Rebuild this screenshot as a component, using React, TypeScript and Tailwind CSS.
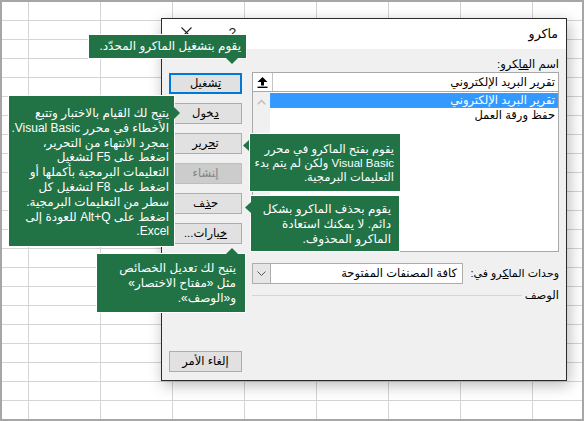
import React from "react";

const ui = "font-['Liberation_Sans','DejaVu_Sans',sans-serif]";
const J = "\u200d";

function Sheet() {
  const cells = Array.from({ length: 22 * 9 });
  return (
    <div className="h-[421px] w-[584px] overflow-hidden border-2 border-[#a6a6a6] bg-white">
      <div className="grid auto-rows-[19px] grid-cols-[27px_repeat(8,72px)]">
        {cells.map((_, i) => (
          <div key={i} className="border-b border-r border-[#d4d4d4]" />
        ))}
      </div>
    </div>
  );
}

// Arabic label with one underlined (accelerator) letter; ZWJ keeps the letters joined
function Acc({ pre, key_, post }: { pre: string; key_: string; post: string }) {
  return (
    <>
      {pre ? pre + J : null}
      <u>{(pre ? J : "") + key_ + (post ? J : "")}</u>
      {post ? J + post : null}
    </>
  );
}

function Btn({ children, kind }: { children: React.ReactNode; kind?: "default" | "disabled" }) {
  if (kind === "default")
    return (
      <div className="flex h-[21px] items-center justify-center border-2 border-[#0078d7] bg-[#e1e1e1] text-[11.5px] text-black">
        {children}
      </div>
    );
  if (kind === "disabled")
    return (
      <div className="flex h-[21px] items-center justify-center border border-[#bfbfbf] bg-[#cccccc] text-[11.5px] text-[#838383]">
        {children}
      </div>
    );
  return (
    <div className="flex h-[21px] items-center justify-center border border-[#adadad] bg-[#e1e1e1] text-[11.5px] text-black">
      {children}
    </div>
  );
}

function Dialog() {
  return (
    <div
      dir="rtl"
      className="absolute left-[161px] top-[18px] flex h-[363px] w-[406px] flex-col border border-[#2b2b2b] bg-[#f0f0f0] shadow-[2px_4px_14px_rgba(0,0,0,0.28)]"
    >
      <div className="flex h-[30px] items-center justify-between bg-white pl-[19px] pr-[8px]">
        <span className="text-[12.5px] text-black">ماكرو</span>
        <div className="flex items-start gap-[35px] self-start pt-[7px]">
          <span className="w-[9px] text-[13px] leading-[13px] text-[#222]">?</span>
          <svg width="11" height="11" viewBox="0 0 11 11" className="mt-[1px] stroke-[#222]">
            <path d="M0.5 0.5 L10.5 10.5 M10.5 0.5 L0.5 10.5" strokeWidth="1.1" />
          </svg>
        </div>
      </div>

      <div className="flex flex-1 gap-[10px] px-[7px]">
        <div className="flex w-[307px] flex-col">
          <div className="mt-[7px] h-[16px] text-[11.5px] leading-[16px] text-black">
            <Acc pre="اسم ال" key_="ما" post="كرو:" />
          </div>
          <div className="flex h-[20px] border border-[#a9a9a9] bg-white">
            <div className="flex-1 pr-[3px] text-[11.5px] leading-[18px] text-black">تقرير البريد الإلكتروني</div>
            <div className="flex w-[20px] items-center justify-center border-r border-[#c4c4c4] bg-white">
              <svg width="11" height="11" viewBox="0 0 11 11">
                <path d="M5.5 0 L10.5 5 L7 5 L7 8.5 L4 8.5 L4 5 L0.5 5 Z" fill="#000" />
                <rect x="0.5" y="9.6" width="10" height="1.4" fill="#000" />
              </svg>
            </div>
          </div>
          <div className="flex h-[160px] border border-t-0 border-[#a9a9a9] bg-white">
            <div className="flex-1 pt-[1px]">
              <div className="h-[15px] border border-dotted border-[#e07a1f] bg-[#3399ff] pr-[2px] text-[11.5px] leading-[13px] text-white">
                تقرير البريد الإلكتروني
              </div>
              <div className="h-[15px] pr-[3px] text-[11.5px] leading-[15px] text-black">حفظ ورقة العمل</div>
            </div>
            <div className="flex w-[17px] justify-center bg-[#f0f0f0] pt-[7px]">
              <svg width="9" height="6" viewBox="0 0 9 6">
                <path d="M0.8 5.2 L4.5 1.5 L8.2 5.2" fill="none" stroke="#c2c2c2" strokeWidth="1.6" />
              </svg>
            </div>
          </div>

          <div className="mt-[11px] flex h-[21px] items-center justify-between">
            <span className="text-[11px] text-black">
              <Acc pre="وحدات الما" key_="ك" post="رو في:" />
            </span>
            <div className="flex h-[21px] w-[211px] border border-[#adadad] bg-white">
              <div className="flex-1 pr-[5px] text-[11.5px] leading-[19px] text-black">كافة المصنفات المفتوحة</div>
              <div className="flex w-[18px] items-center justify-center border-r border-[#adadad] bg-[#e6e6e6]">
                <svg width="9" height="5" viewBox="0 0 9 5">
                  <path d="M0.5 0.5 L4.5 4.5 L8.5 0.5" fill="none" stroke="#555" strokeWidth="1" />
                </svg>
              </div>
            </div>
          </div>

          <div className="mt-[4px] flex h-[14px] items-center gap-[3px]">
            <span className="text-[11.5px] leading-[14px] text-black">الوصف</span>
            <div className="h-px flex-1 bg-[#d5d5d5]" />
          </div>
        </div>

        <div className="flex w-[73px] flex-col gap-[9px] pt-[24px]">
          <Btn kind="default">
            <Acc pre="" key_="ت" post="شغيل" />
          </Btn>
          <Btn>
            <Acc pre="" key_="د" post="خول" />
          </Btn>
          <Btn>
            <Acc pre="ت" key_="ح" post="رير" />
          </Btn>
          <Btn kind="disabled">
            <Acc pre="" key_="إ" post="نشاء" />
          </Btn>
          <Btn>
            <Acc pre="ح" key_="ذ" post="ف" />
          </Btn>
          <Btn>
            <Acc pre="" key_="خ" post="يارات..." />
          </Btn>
          <div className="mt-[98px]">
            <Btn>إلغاء الأمر</Btn>
          </div>
        </div>
      </div>
    </div>
  );
}

function Lines({ lines }: { lines: string[] }) {
  return (
    <>
      {lines.map((l) => (
        <div key={l} className="whitespace-nowrap">
          {l}
        </div>
      ))}
    </>
  );
}

export default function App() {
  return (
    <div className={`relative h-[421px] w-[584px] overflow-hidden ${ui}`}>
      <Sheet />
      <Dialog />

      {/* callouts */}
      <div
        dir="rtl"
        className="absolute left-[88px] top-[34px] h-[25px] w-[159px] border border-white bg-[#217346] pr-[5px] text-[12px] leading-[23px] text-white"
      >
        يقوم بتشغيل الماكرو المحدّد.
      </div>
      <svg className="absolute left-[226px] top-[58px]" width="12" height="6" viewBox="0 0 12 6">
        <path d="M0 0 L12 0 L6 6 Z" fill="#217346" />
      </svg>

      <div
        dir="rtl"
        className="absolute left-[8px] top-[95px] h-[152px] w-[167px] border border-white bg-[#217346] pr-[5px] pt-[10px] text-[12px] leading-[14.8px] text-white"
      >
        <Lines
          lines={[
            "يتيح لك القيام بالاختبار وتتبع",
            "الأخطاء في محرر Visual Basic.",
            "بمجرد الانتهاء من التحرير،",
            "اضغط على F5 لتشغيل",
            "التعليمات البرمجية بأكملها أو",
            "اضغط على F8 لتشغيل كل",
            "سطر من التعليمات البرمجية.",
            "اضغط على Alt+Q للعودة إلى",
            "Excel.",
          ]}
        />
      </div>
      <svg className="absolute left-[174px] top-[107px]" width="6" height="12" viewBox="0 0 6 12">
        <path d="M0 0 L6 6 L0 12 Z" fill="#217346" />
      </svg>

      <div
        dir="rtl"
        className="absolute left-[249px] top-[133px] h-[59px] w-[152px] border border-white bg-[#217346] pr-[6px] pt-[8px] text-[11.5px] leading-[14px] text-white"
      >
        <Lines lines={["يقوم بفتح الماكرو في محرر", "Visual Basic ولكن لم يتم بدء", "التعليمات البرمجية."]} />
      </div>
      <svg className="absolute left-[243px] top-[140px]" width="6" height="11" viewBox="0 0 6 11">
        <path d="M6 0 L0 5.5 L6 11 Z" fill="#217346" />
      </svg>

      <div
        dir="rtl"
        className="absolute left-[250px] top-[195px] h-[57px] w-[150px] border border-white bg-[#217346] pr-[8px] pt-[6px] text-[12px] leading-[14.8px] text-white"
      >
        <Lines lines={["يقوم بحذف الماكرو بشكل", "دائم. لا يمكنك استعادة", "الماكرو المحذوف."]} />
      </div>
      <svg className="absolute left-[245px] top-[202px]" width="6" height="11" viewBox="0 0 6 11">
        <path d="M6 0 L0 5.5 L6 11 Z" fill="#217346" />
      </svg>

      <div
        dir="rtl"
        className="absolute left-[96px] top-[253px] h-[60px] w-[150px] border border-white bg-[#217346] pr-[9px] pt-[7px] text-[12px] leading-[15px] text-white"
      >
        <Lines lines={["يتيح لك تعديل الخصائص", "مثل «مفتاح الاختصار»", "و«الوصف»."]} />
      </div>
      <svg className="absolute left-[226px] top-[248px]" width="12" height="6" viewBox="0 0 12 6">
        <path d="M0 6 L6 0 L12 6 Z" fill="#217346" />
      </svg>
    </div>
  );
}
